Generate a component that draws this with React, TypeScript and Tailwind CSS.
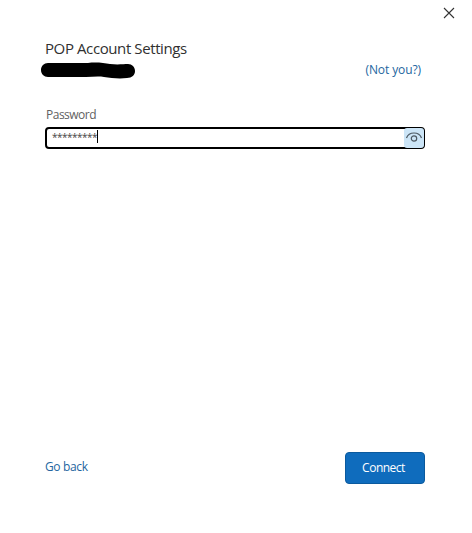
export default function App() {
  return (
    <main className="flex h-[533px] w-[472px] flex-col bg-white font-['Open_Sans','Noto_Sans',sans-serif]">
      <div className="flex h-[26px] justify-end pr-[17px] pt-[7px]">
        <button aria-label="Close" className="block size-3">
          <svg viewBox="0 0 12 12" className="size-3" fill="none" stroke="#333" strokeWidth="1.1">
            <path d="M1 1 11 11M11 1 1 11" />
          </svg>
        </button>
      </div>
      <header className="flex h-[81px] flex-col pl-[45px] pr-[51px] pt-[11px]">
        <h1 className="h-[23px] whitespace-nowrap text-[15px] leading-[22px] tracking-[-0.4px] text-[#303030]">POP Account Settings</h1>
        <div className="flex h-5 items-start justify-between">
          <svg viewBox="0 0 96 18" className="-ml-[5px] mt-[1px] h-[18px] w-24" fill="#000">
            <path d="M8 2H48C56 1 64 2 70 3C78 4 84 3 88 3C92 3 95 6 95 10C95 14 92 17 87 17C79 18 71 17 64 16C58 15 52 16 46 16H8C4 16 1 13 1 9C1 5 4 2 8 2Z" />
          </svg>
          <button className="h-5 whitespace-nowrap text-[12px] font-medium leading-5 tracking-[-0.1px] text-[#2466a0]">(Not you?)</button>
        </div>
      </header>
      <section className="flex flex-1 flex-col pl-[45px] pr-[47px]">
        <label className="h-5 pl-[1px] text-[12px] leading-4 tracking-[-0.5px] text-[#616161]">Password</label>
        <div className="flex h-[22px] w-[380px] rounded-[4px] border-2 border-black bg-white">
          <div className="flex flex-1 items-start pl-[5px]">
            <span className="text-[10px] leading-4 tracking-[-0.5px] text-[#444]">*********</span>
            <span className="mt-[1px] h-[13px] w-px bg-black" />
          </div>
          <button aria-label="Show password" className="-my-[1px] -mr-px flex h-5 w-5 items-center justify-center rounded-[3px] bg-[#cce5f7]">
            <svg viewBox="0 0 18 16" className="h-4 w-[18px] shrink-0" fill="none" stroke="#4d5963" strokeWidth="1.2">
              <path d="M1.5 8C2.6 5 5.4 3 9 3S15.4 5 16.5 8" />
              <circle cx="9" cy="8.5" r="2.7" />
            </svg>
          </button>
        </div>
      </section>
      <footer className="flex h-[81px] justify-between pl-[45px] pr-[47px]">
        <button className="h-[30px] text-[12px] font-medium leading-[30px] tracking-[-0.35px] text-[#2466a0]">Go back</button>
        <button className="h-8 w-20 rounded-[4px] border border-[#0b5a9e] bg-[#0f6cbd] pr-[3px] text-[12px] font-medium leading-[30px] tracking-[-0.5px] text-white">Connect</button>
      </footer>
    </main>
  );
}
